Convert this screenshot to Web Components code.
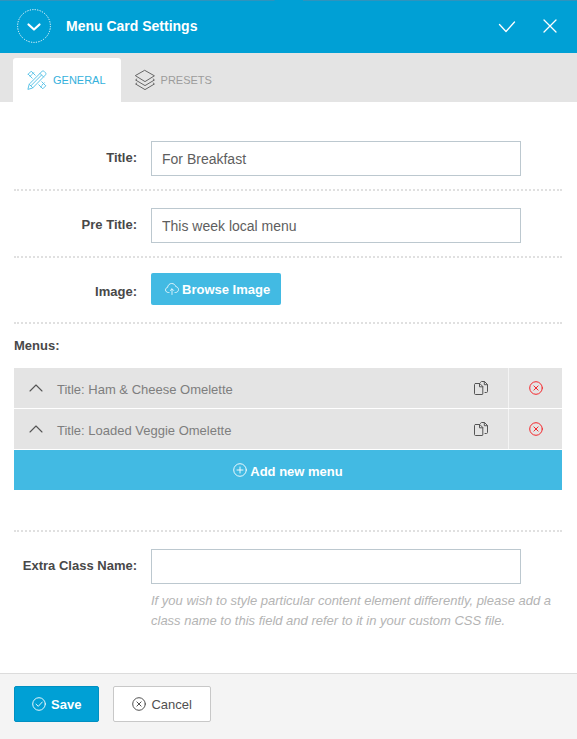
<!DOCTYPE html>
<html lang="en">
<head>
<meta charset="utf-8">
<meta name="viewport" content="width=device-width, initial-scale=1">
<title>Menu Card Settings</title>
<style>
  html, body { margin: 0; }
  body {
    min-height: 100vh;
    display: flex;
    background: #fff;
    color: #484848;
    font: 13px/20px "Liberation Sans", Arial, sans-serif;
  }
</style>
</head>
<body>
<settings-panel></settings-panel>

<script>
const svg = (box, body, width = 1) =>
  `<svg viewBox="0 0 ${box} ${box}" fill="none" stroke="currentColor" stroke-width="${width}" stroke-linecap="round" stroke-linejoin="round" aria-hidden="true">${body}</svg>`;

const ICONS = {
  collapse: svg(34, '<circle cx="17" cy="17" r="16.400" stroke-width="1" stroke-dasharray="1.200 1.300" stroke-linecap="butt"/><path d="M11.500 15.500l5.500 5 5.500-5" stroke-width="2.200"/>'),
  check: svg(18, '<path d="M1.500 7.500L8 14.500 16.500 5"/>', 1.3),
  close: svg(14, '<path d="M1 1l12 12M13 1L1 13"/>', 1.3),
  design: svg(20, '<path d="M1.200 4.200L4.200 1.200 8.200 5.200M5.200 8.200L1.200 4.200M11.800 14.800l4 4 3-3-4-4M3.200 6.200l1.300-1.300M5.200 4.200l1.500-1.500M13.800 16.800l1.300-1.300M15.300 14.800l2-2"/><path d="M1 19l1.200-4.800L15 1.400c.8-.7 1.800-.4 2.400.2l1 1c.7.700.7 1.700 0 2.400L5.800 17.800zM2.200 14.200l3.600 3.600M13 3.400L16.600 7M14.400 5.200L4 15.700"/>', 1),
  layers: svg(20, '<path d="M10 .5L19.400 5.800 10 11.600.6 5.800z"/><path d="M1.800 9L.6 10 10 15.600 19.400 10l-1.200-1M1.800 13L.6 14 10 19.600 19.400 14l-1.200-1"/>', 1),
  cloud: svg(14, '<path d="M4 10.500H3.500C1.800 10.500.5 9.400.5 7.900c0-1.300.9-2.300 2.100-2.500C2.800 3.200 4.500 1.500 6.700 1.500c2 0 3.600 1.300 4.100 3.100 1.500.2 2.700 1.400 2.700 2.900 0 1.700-1.300 3-3 3H10M7 12.500V7M5.300 8.500L7 6.800l1.700 1.700"/>', .8),
  up: svg(14, '<path d="M1 10l6-6 6 6"/>', 1.1),
  copy: svg(14, '<path d="M1.500 2.500h4.300l3 3v7.500c0 .3-.2.500-.5.500H1.500c-.5 0-1-.3-1-.8V3.500c0-.6.400-1 1-1zM5.500 2.700v3.100h3.200M6.500 1.500c.2-.6.500-1 1-1h3l3 3v7c0 .6-.4 1-1 1h-1.500M10.300.7v3h3"/>', 1),
  remove: svg(14, '<circle cx="7" cy="7" r="6.300"/><path d="M4.900 4.900l4.200 4.200M9.100 4.900L4.900 9.100"/>', 1),
  add: svg(14, '<circle cx="7" cy="7" r="6.300"/><path d="M7 4v6M4 7h6"/>', .9),
  done: svg(14, '<circle cx="7" cy="7" r="6.300"/><path d="M4 7.200l2.300 2.100 4-4.300"/>', .9)
};

const BASE = `
  *, *::before, *::after { box-sizing: border-box; }
  button, input { font: inherit; color: inherit; margin: 0; }
  button { background: none; border: 0; padding: 0; cursor: pointer; }
  :focus-visible { outline: 2px solid #0078a8; outline-offset: 1px; }
`;

function define(name, css, html) {
  customElements.define(name, class extends HTMLElement {
    connectedCallback() {
      if (this.shadowRoot) return;
      const template = document.createElement('template');
      template.innerHTML = `<style>${BASE}${css}</style>${html(this)}`;
      this.attachShadow({ mode: 'open' }).append(template.content.cloneNode(true));
    }
  });
}

define('ui-icon', `
  :host { display: block; flex: none; width: 14px; height: 14px; }
  svg { display: block; width: 100%; height: 100%; overflow: visible; }
`, el => ICONS[el.getAttribute('name')]);

define('panel-header', `
  :host {
    --edge: linear-gradient(#2f93bd, #2f93bd);
    display: block; color: #fff;
    background: var(--edge) left top / calc(50% - 14px) 1px no-repeat, var(--edge) right top / calc(50% - 14px) 1px no-repeat, #00a0d5;
  }
  header { display: flex; align-items: center; height: 53px; padding: 0 20px 2px 17px; }
  h1 { flex: 1; margin: 0 0 0 15px; padding-top: 1px; font-size: 14px; line-height: 20px; font-weight: 700; }
  button { display: block; }
  .toggle ui-icon { width: 34px; height: 34px; }
  .ok ui-icon { width: 18px; height: 18px; }
  .close { margin-left: 27px; }
`, () => `
  <header>
    <button class="toggle" type="button" aria-label="Collapse panel"><ui-icon name="collapse"></ui-icon></button>
    <h1><slot></slot></h1>
    <button class="ok" type="button" aria-label="Apply"><ui-icon name="check"></ui-icon></button>
    <button class="close" type="button" aria-label="Close"><ui-icon name="close"></ui-icon></button>
  </header>`);

define('panel-tab', `
  :host { display: block; }
  button { display: flex; align-items: center; gap: 6px; height: 44px; padding: 0 15px 0 14px; font-size: 11px; color: #9c9c9c; border-radius: 3px 3px 0 0; }
  ui-icon { width: 20px; height: 20px; color: #666; }
  :host([selected]) button { background: #fff; color: #35b1dc; }
  :host([selected]) ui-icon { color: #5cc4e8; }
`, el => `<button type="button" role="tab" aria-selected="${el.hasAttribute('selected')}"><ui-icon name="${el.getAttribute('icon')}"></ui-icon><slot></slot></button>`);

define('panel-tabs', `
  :host { display: block; background: #e4e4e4; padding: 5px 13px 0; }
  div { display: flex; }
`, () => `<div role="tablist"><slot></slot></div>`);

define('form-row', `
  :host { display: grid; grid-template-columns: 123px minmax(0, 1fr); column-gap: 14px; }
  label, .label { padding-top: 7px; text-align: right; font-weight: 700; }
  .label { padding-top: 9px; }
  input { display: block; width: 90%; height: 35px; padding: 0 10px; border: 1px solid #bcc8cf; border-radius: 0; background: #fff; font-size: 14px; color: #5e5e5e; }
  p { margin: 7px 0 0; color: #b4b4b4; font-style: italic; }
`, el => {
  const label = el.getAttribute('label');
  if (el.hasAttribute('custom')) return `<span class="label">${label}</span><div><slot></slot></div>`;
  const help = el.getAttribute('help');
  return `<label for="field">${label}</label>
    <div><input id="field" type="text" value="${el.getAttribute('value') || ''}"${help ? ' aria-describedby="help"' : ''}>
    ${help ? `<p id="help">${help}</p>` : ''}</div>`;
});

define('ui-button', `
  :host { display: inline-block; vertical-align: top; }
  button { display: flex; align-items: center; justify-content: center; gap: 5px; width: 100%; height: 36px; padding: 0 17px; border: 1px solid #0090c2; border-radius: 2px; background: #00a0d5; color: #fff; font-weight: 700; }
  span { padding-top: 1px; }
  :host([kind="plain"]) button { padding: 0 18px; background: #fff; border-color: #c8c8c8; color: #505050; font-weight: 400; }
  :host([kind="light"]) button { height: 32px; padding: 0 11px 0 14px; gap: 3px; border: 0; background: #42bae3; }
  :host([kind="bar"]) { display: block; }
  :host([kind="bar"]) button { height: 40px; gap: 3px; border: 0; border-radius: 0; background: #42bae3; }
  :host([kind="bar"]) span { padding-top: 3px; }
`, el => `<button type="button"><ui-icon name="${el.getAttribute('icon')}"></ui-icon><span><slot></slot></span></button>`);

define('menu-item', `
  :host { display: flex; height: 40px; background: #e4e4e4; color: #7e7e7e; }
  .title { flex: 1; display: flex; align-items: center; gap: 14px; padding: 0 0 0 15px; text-align: left; }
  .title span { padding-top: 3px; }
  .title ui-icon { color: #555; }
  .icon { display: grid; place-items: center; width: 54px; color: #555; }
  .remove { border-left: 1px solid #f4f4f4; color: #f5262b; }
`, () => `
  <button class="title" type="button"><ui-icon name="up"></ui-icon><span><slot></slot></span></button>
  <button class="icon" type="button" aria-label="Duplicate"><ui-icon name="copy"></ui-icon></button>
  <button class="icon remove" type="button" aria-label="Remove"><ui-icon name="remove"></ui-icon></button>`);

define('menu-list', `
  :host { display: block; }
  h2 { margin: 0 0 12px; font-size: 13px; line-height: 20px; }
  .items { display: grid; gap: 1px; }
`, () => `<h2>Menus:</h2><div class="items"><slot></slot></div>`);

define('panel-footer', `
  :host { display: flex; gap: 14px; padding: 12px 14px 17px; background: #f4f4f4; border-top: 1px solid #dcdcdc; }
`, () => `<slot></slot>`);

define('settings-panel', `
  :host { flex: 1; min-width: 0; display: flex; flex-direction: column; }
  main { flex: 1; padding: 39px 15px 42px 14px; }
  hr { margin: 13px 0 17px; border: 0; border-top: 2px dotted #e0e0e0; }
  .before-image { margin-bottom: 15px; }
  .before-menus { margin: 17px 0 12px; }
  .before-extra { margin-top: 40px; }
`, () => `
  <panel-header>Menu Card Settings</panel-header>
  <panel-tabs>
    <panel-tab icon="design" selected>GENERAL</panel-tab>
    <panel-tab icon="layers">PRESETS</panel-tab>
  </panel-tabs>
  <main>
    <form-row label="Title:" value="For Breakfast"></form-row>
    <hr>
    <form-row label="Pre Title:" value="This week local menu"></form-row>
    <hr class="before-image">
    <form-row label="Image:" custom><ui-button kind="light" icon="cloud">Browse Image</ui-button></form-row>
    <hr class="before-menus">
    <menu-list>
      <menu-item>Title: Ham &amp; Cheese Omelette</menu-item>
      <menu-item>Title: Loaded Veggie Omelette</menu-item>
      <ui-button kind="bar" icon="add">Add new menu</ui-button>
    </menu-list>
    <hr class="before-extra">
    <form-row label="Extra Class Name:" help="If you wish to style particular content element differently, please add a class name to this field and refer to it in your custom CSS file."></form-row>
  </main>
  <panel-footer>
    <ui-button icon="done">Save</ui-button>
    <ui-button kind="plain" icon="remove">Cancel</ui-button>
  </panel-footer>`);
</script>
</body>
</html>
